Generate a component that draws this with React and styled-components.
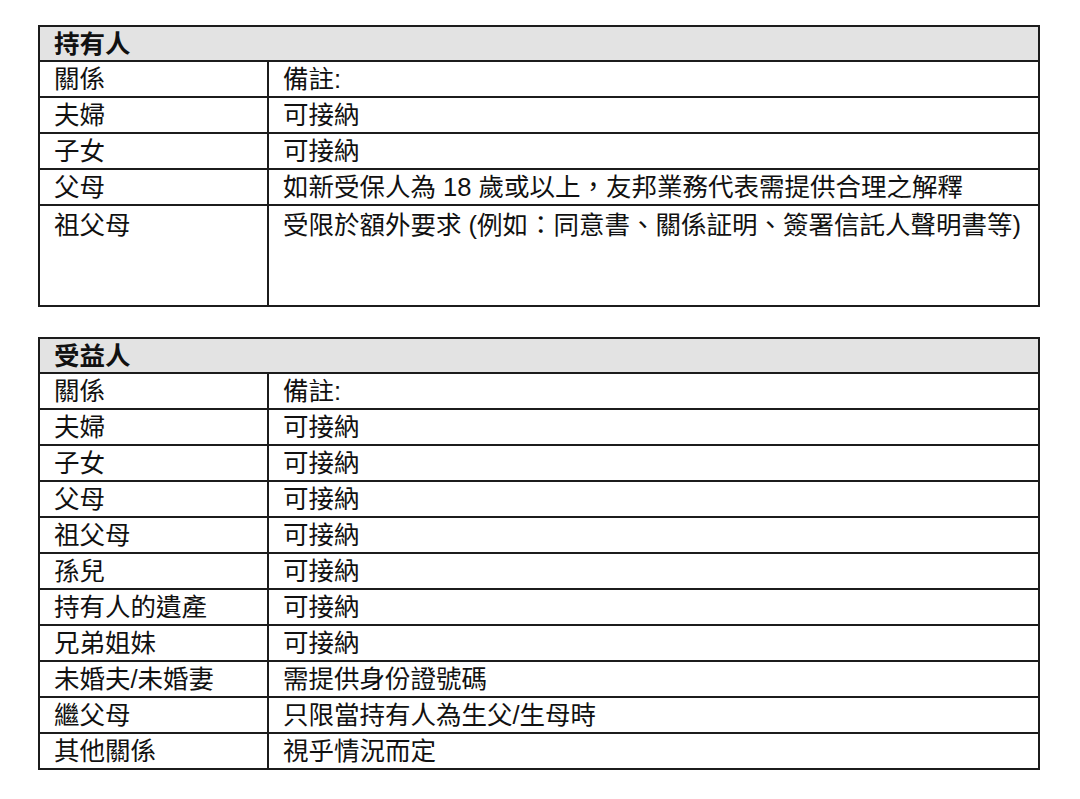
import styled, { createGlobalStyle } from "styled-components";

const GlobalStyle = createGlobalStyle`
  html, body {
    margin: 0;
    padding: 0;
    background: #fff;
  }
  body {
    font-family: "Liberation Sans", "Noto Sans CJK TC", Arial, sans-serif;
    color: #111;
  }
`;

const Page = styled.div`
  display: flex;
  flex-direction: column;
  gap: 30px;
  padding: 25px 0 0 38px;
`;

const Table = styled.table`
  width: 1002px;
  border-collapse: collapse;
  table-layout: fixed;
  font-size: 25.5px;
  line-height: 1;
`;

const HeadCell = styled.th`
  height: 31px;
  padding: 2px 14px 0;
  border: 2px solid #1c1c1c;
  background: #e3e3e3;
  text-align: left;
  font-weight: 700;
  vertical-align: middle;
`;

const Cell = styled.td`
  height: ${(p) => (p.$tall ? "92px" : "32px")};
  padding: ${(p) => (p.$tall ? "7px 14px 0" : "2px 14px 0")};
  border: 2px solid #1c1c1c;
  vertical-align: ${(p) => (p.$tall ? "top" : "middle")};
  white-space: nowrap;
  font-weight: 400;
`;

const holder = [
  ["關係", "備註:"],
  ["夫婦", "可接納"],
  ["子女", "可接納"],
  ["父母", "如新受保人為 18 歲或以上，友邦業務代表需提供合理之解釋"],
  ["祖父母", "受限於額外要求 (例如：同意書、關係証明、簽署信託人聲明書等)", true],
];

const beneficiary = [
  ["關係", "備註:"],
  ["夫婦", "可接納"],
  ["子女", "可接納"],
  ["父母", "可接納"],
  ["祖父母", "可接納"],
  ["孫兒", "可接納"],
  ["持有人的遺產", "可接納"],
  ["兄弟姐妹", "可接納"],
  ["未婚夫/未婚妻", "需提供身份證號碼"],
  ["繼父母", "只限當持有人為生父/生母時"],
  ["其他關係", "視乎情況而定"],
];

function RelationTable({ title, rows }) {
  return (
    <Table>
      <colgroup>
        <col style={{ width: "229px" }} />
        <col />
      </colgroup>
      <thead>
        <tr>
          <HeadCell colSpan={2}>{title}</HeadCell>
        </tr>
      </thead>
      <tbody>
        {rows.map(([rel, note, tall]) => (
          <tr key={rel}>
            <Cell $tall={tall}>{rel}</Cell>
            <Cell $tall={tall}>{note}</Cell>
          </tr>
        ))}
      </tbody>
    </Table>
  );
}

export default function App() {
  return (
    <>
      <GlobalStyle />
      <Page>
        <RelationTable title="持有人" rows={holder} />
        <RelationTable title="受益人" rows={beneficiary} />
      </Page>
    </>
  );
}
